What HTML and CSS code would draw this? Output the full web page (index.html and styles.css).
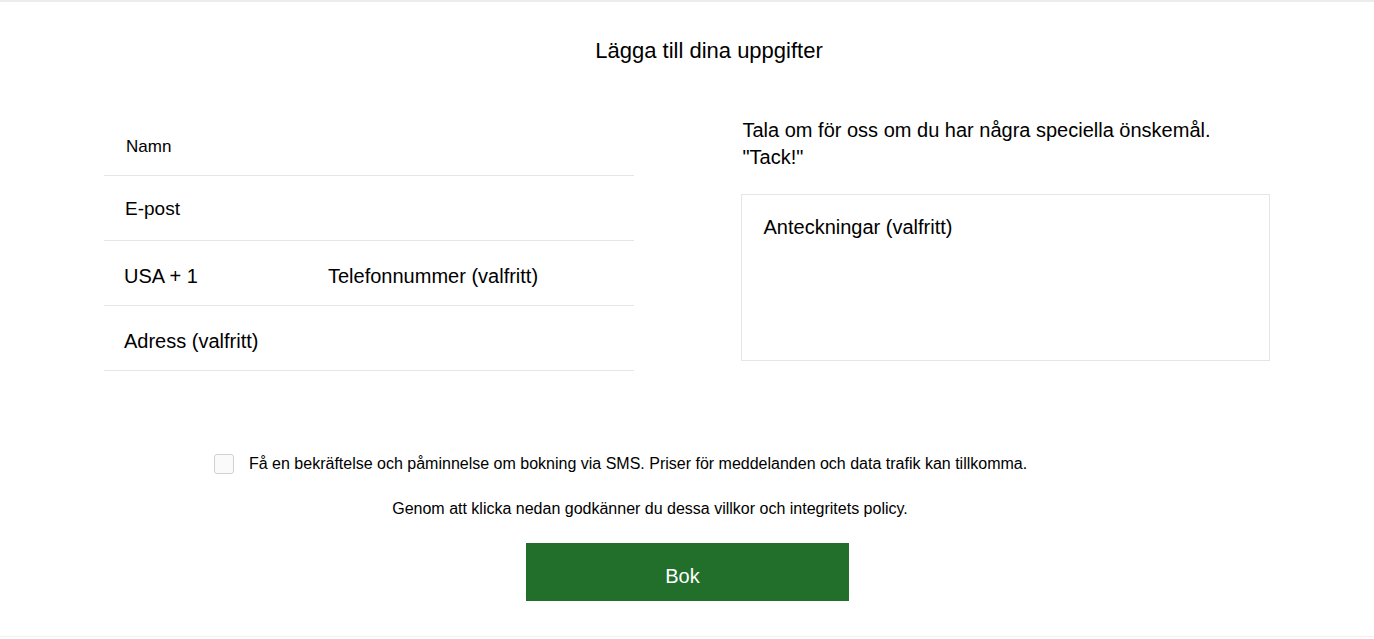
FILE: index.html
```html
<!DOCTYPE html>
<html lang="sv">
<head>
<meta charset="utf-8">
<title>Lägga till dina uppgifter</title>
<link rel="stylesheet" href="styles.css">
</head>
<body>
<div class="page">
  <h1 class="title">Lägga till dina uppgifter</h1>
  <div class="columns">
    <div class="fields">
      <div class="row row-name"><span class="label small">Namn</span></div>
      <div class="row row-mail"><span class="label mail">E-post</span></div>
      <div class="row row-low"><span class="label code">USA + 1</span><span class="label">Telefonnummer (valfritt)</span></div>
      <div class="row row-low"><span class="label addr">Adress (valfritt)</span></div>
    </div>
    <div class="notes-col">
      <p class="notes-intro">Tala om för oss om du har några speciella önskemål.<br>"Tack!"</p>
      <div class="notes-box"><span class="notes-placeholder">Anteckningar (valfritt)</span></div>
    </div>
  </div>
  <div class="consent">
    <span class="checkbox"></span>
    <span class="consent-text">Få en bekräftelse och påminnelse om bokning via SMS. Priser för meddelanden och data trafik kan tillkomma.</span>
  </div>
  <p class="terms">Genom att klicka nedan godkänner du dessa villkor och integritets policy.</p>
  <div class="actions"><button class="book">Bok</button></div>
</div>
</body>
</html>
```

FILE: styles.css
```css
* { box-sizing: border-box; }
html, body { margin: 0; padding: 0; background: #fff; }
body {
  font-family: "Liberation Sans", Arial, sans-serif;
  color: #000;
}
.page {
  height: 637px;
  border-top: 2px solid #ececec;
  border-bottom: 1px solid #f0f0f0;
  display: flex;
  flex-direction: column;
}
.title {
  margin: 0;
  padding: 37px 0 0 44px;
  text-align: center;
  font-size: 22px;
  font-weight: normal;
  line-height: 24px;
}
.columns {
  display: flex;
  gap: 107px;
  padding: 0 104px;
  margin-top: 48px;
}
.fields {
  width: 530px;
  display: flex;
  flex-direction: column;
}
.row {
  height: 65px;
  border-bottom: 1px solid #e6e6e6;
  display: flex;
  align-items: center;
  padding-left: 20px;
  font-size: 20px;
}
.row-name { padding-left: 22px; padding-top: 8px; }
.row-mail { padding-top: 2px; }
.row-low { padding-top: 6px; }
.label.small { font-size: 17px; }
.label.mail { font-size: 19px; padding-left: 1px; }
.row-low .code { width: 204px; }
.notes-col {
  width: 530px;
  padding-top: 6px;
}
.notes-intro {
  margin: 0 0 0 2px;
  font-size: 20px;
  line-height: 27px;
}
.notes-box {
  margin-top: 23px;
  height: 167px;
  border: 1px solid #e6e6e6;
  padding: 21px 22px 19px;
  font-size: 20px;
}
.consent {
  display: flex;
  align-items: center;
  gap: 15px;
  margin-top: 83px;
  padding-left: 214px;
}
.checkbox {
  width: 20px;
  height: 20px;
  border: 1px solid #d2d2d2;
  border-radius: 3px;
  background: #fafafa;
}
.consent-text { font-size: 16px; }
.terms {
  margin: 26px 0 0 0;
  text-align: center;
  padding-right: 74px;
  font-size: 16px;
}
.actions {
  display: flex;
  justify-content: center;
  margin-top: 25px;
  padding-left: 1px;
}
.book {
  width: 323px;
  height: 58px;
  border: 0;
  padding: 8px 10px 0 0;
  background: #226f2c;
  color: #fff;
  font-family: "Liberation Sans", Arial, sans-serif;
  font-size: 20px;
}
```
